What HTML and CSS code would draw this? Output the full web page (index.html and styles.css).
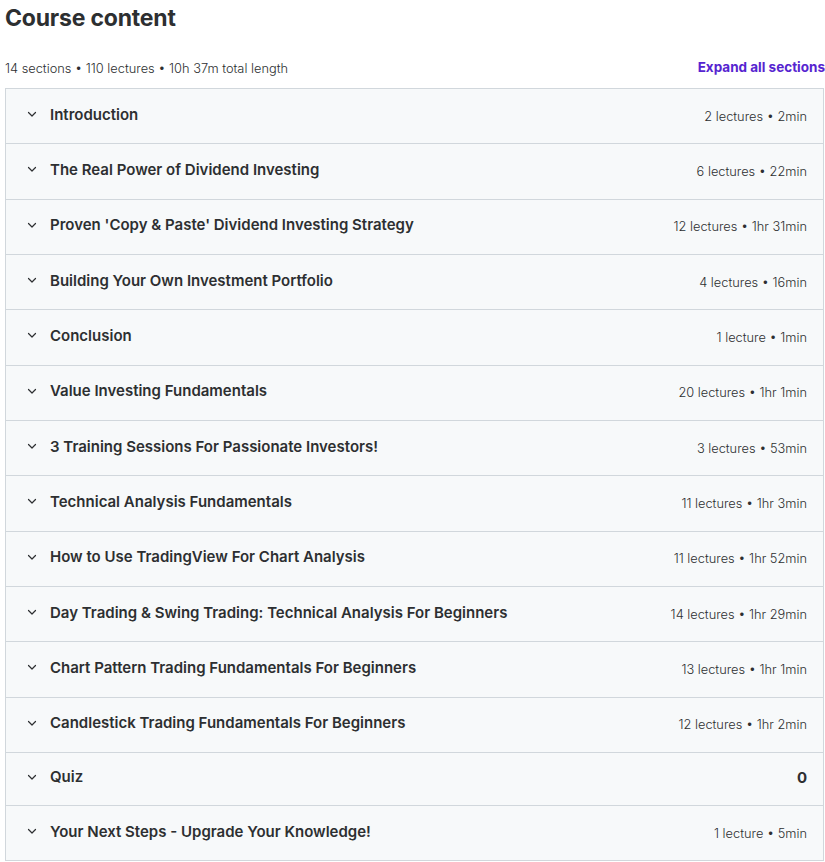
FILE: index.html
```html
<!DOCTYPE html>
<html lang="en">
<head>
<meta charset="utf-8">
<title>Course content</title>
<link rel="stylesheet" href="styles.css">
</head>
<body>
<div class="page">
  <h2 class="title">Course content</h2>
  <div class="summary">
    <span class="meta">14 sections • 110 lectures • 10h 37m total length</span>
    <button class="expand">Expand all sections</button>
  </div>
  <div class="sections">
    <div class="row"><svg class="chev" viewBox="0 0 12 12"><path d="M2.5 4.5 L6 8 L9.5 4.5"/></svg><span class="name">Introduction</span><span class="info">2 lectures • 2min</span></div>
    <div class="row"><svg class="chev" viewBox="0 0 12 12"><path d="M2.5 4.5 L6 8 L9.5 4.5"/></svg><span class="name">The Real Power of Dividend Investing</span><span class="info">6 lectures • 22min</span></div>
    <div class="row"><svg class="chev" viewBox="0 0 12 12"><path d="M2.5 4.5 L6 8 L9.5 4.5"/></svg><span class="name">Proven 'Copy &amp; Paste' Dividend Investing Strategy</span><span class="info">12 lectures • 1hr 31min</span></div>
    <div class="row"><svg class="chev" viewBox="0 0 12 12"><path d="M2.5 4.5 L6 8 L9.5 4.5"/></svg><span class="name">Building Your Own Investment Portfolio</span><span class="info">4 lectures • 16min</span></div>
    <div class="row"><svg class="chev" viewBox="0 0 12 12"><path d="M2.5 4.5 L6 8 L9.5 4.5"/></svg><span class="name">Conclusion</span><span class="info">1 lecture • 1min</span></div>
    <div class="row"><svg class="chev" viewBox="0 0 12 12"><path d="M2.5 4.5 L6 8 L9.5 4.5"/></svg><span class="name">Value Investing Fundamentals</span><span class="info">20 lectures • 1hr 1min</span></div>
    <div class="row"><svg class="chev" viewBox="0 0 12 12"><path d="M2.5 4.5 L6 8 L9.5 4.5"/></svg><span class="name">3 Training Sessions For Passionate Investors!</span><span class="info">3 lectures • 53min</span></div>
    <div class="row"><svg class="chev" viewBox="0 0 12 12"><path d="M2.5 4.5 L6 8 L9.5 4.5"/></svg><span class="name">Technical Analysis Fundamentals</span><span class="info">11 lectures • 1hr 3min</span></div>
    <div class="row"><svg class="chev" viewBox="0 0 12 12"><path d="M2.5 4.5 L6 8 L9.5 4.5"/></svg><span class="name">How to Use TradingView For Chart Analysis</span><span class="info">11 lectures • 1hr 52min</span></div>
    <div class="row"><svg class="chev" viewBox="0 0 12 12"><path d="M2.5 4.5 L6 8 L9.5 4.5"/></svg><span class="name">Day Trading &amp; Swing Trading: Technical Analysis For Beginners</span><span class="info">14 lectures • 1hr 29min</span></div>
    <div class="row"><svg class="chev" viewBox="0 0 12 12"><path d="M2.5 4.5 L6 8 L9.5 4.5"/></svg><span class="name">Chart Pattern Trading Fundamentals For Beginners</span><span class="info">13 lectures • 1hr 1min</span></div>
    <div class="row"><svg class="chev" viewBox="0 0 12 12"><path d="M2.5 4.5 L6 8 L9.5 4.5"/></svg><span class="name">Candlestick Trading Fundamentals For Beginners</span><span class="info">12 lectures • 1hr 2min</span></div>
    <div class="row row-short"><svg class="chev" viewBox="0 0 12 12"><path d="M2.5 4.5 L6 8 L9.5 4.5"/></svg><span class="name">Quiz</span><span class="info info-bold">0</span></div>
    <div class="row"><svg class="chev" viewBox="0 0 12 12"><path d="M2.5 4.5 L6 8 L9.5 4.5"/></svg><span class="name">Your Next Steps - Upgrade Your Knowledge!</span><span class="info">1 lecture • 5min</span></div>
  </div>
</div>
</body>
</html>
```

FILE: styles.css
```css
html, body {
  margin: 0;
  padding: 0;
  background: #ffffff;
}

body {
  font-family: Inter, "Noto Sans", "Liberation Sans", sans-serif;
  color: #2d2f31;
}

.page {
  width: 820px;
  margin-left: 5px;
}

.title {
  margin: 0;
  padding: 2px 0 0 0;
  font-size: 23px;
  line-height: 32px;
  font-weight: 700;
  letter-spacing: -0.2px;
  color: #2d2f31;
}

.summary {
  display: flex;
  justify-content: space-between;
  align-items: center;
  margin-top: 23px;
  height: 22px;
  margin-bottom: 9px;
}

.meta {
  font-size: 12.8px;
  font-weight: 300;
  color: #2d2f31;
}

.expand {
  border: 0;
  background: none;
  padding: 0;
  font-family: inherit;
  font-size: 13.5px;
  font-weight: 700;
  color: #5624d0;
  cursor: pointer;
  margin-top: -3px;
}

.sections {
  border: 1px solid #d1d7dc;
  border-bottom: 0;
  margin-right: 1px;
}

.row {
  display: flex;
  align-items: center;
  height: 55.33px;
  box-sizing: border-box;
  padding: 0 16px 0 20px;
  background: #f7f9fa;
  border-bottom: 1px solid #d1d7dc;
}

.row-short {
  height: 53px;
}

.chev {
  width: 12px;
  height: 12px;
  flex: none;
  fill: none;
  stroke: #2d2f31;
  stroke-width: 1.2;
  stroke-linecap: round;
  stroke-linejoin: round;
  margin-right: 12px;
  margin-bottom: 4px;
}

.name {
  flex: 1;
  font-size: 15px;
  font-weight: 600;
  color: #2d2f31;
  margin-bottom: 4px;
}

.info {
  font-size: 12.8px;
  font-weight: 300;
  color: #2d2f31;
}

.info-bold {
  font-size: 15px;
  font-weight: 700;
  margin-bottom: 2px;
}
```
